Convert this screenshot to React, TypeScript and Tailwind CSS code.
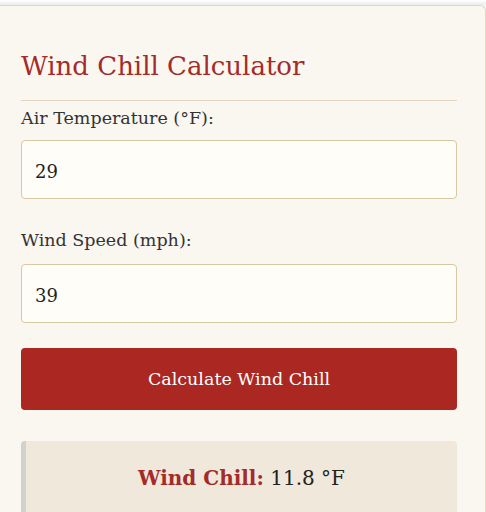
import React from "react";

export default function App() {
  const font = { fontFamily: 'Georgia, "DejaVu Serif", serif' };
  return (
    <div className="min-h-[512px] w-[486px] overflow-hidden bg-[#faf7f0]" style={font}>
      <div className="h-[5px] bg-gradient-to-b from-white to-[#ececec]" />
      <div className="rounded-tr-[6px] border-t border-r border-[#e3d7c5] bg-[#faf7f0] pl-[21px] pr-[28px] pt-[42px] pb-10">
        <h1 className="border-b border-[#e3d5bf] pb-[16px] text-[26px] leading-[36px] text-[#a52a2a]">
          Wind Chill Calculator
        </h1>
        <label className="mt-[5px] mb-[10px] block text-[17.5px] leading-[24px] text-[#333]">
          Air Temperature (°F):
        </label>
        <input
          defaultValue="29"
          className="block h-[59px] w-full rounded-[4px] border border-[#d8c8a2] bg-[#fffdf8] px-[13px] pt-[3px] text-[18px] text-[#222] outline-none"
        />
        <label className="mt-[29px] mb-[12px] block text-[17.5px] leading-[24px] text-[#333]">
          Wind Speed (mph):
        </label>
        <input
          defaultValue="39"
          className="block h-[59px] w-full rounded-[4px] border border-[#d8c8a2] bg-[#fffdf8] px-[13px] pt-[3px] text-[18px] text-[#222] outline-none"
        />
        <button className="mt-[25px] flex h-[62px] w-full items-center justify-center rounded-[4px] bg-[#ab2822] text-[17.5px] text-white">
          Calculate Wind Chill
        </button>
        <div className="mt-[31px] h-[100px] rounded-[4px] border-l-[5px] border-[#d3d1ce] bg-[#f0e8da] pt-[22px] text-center text-[20px] leading-[30px] text-[#222]">
          <span className="font-bold text-[#a52a2a]">Wind Chill:</span> 11.8 °F
        </div>
      </div>
    </div>
  );
}
